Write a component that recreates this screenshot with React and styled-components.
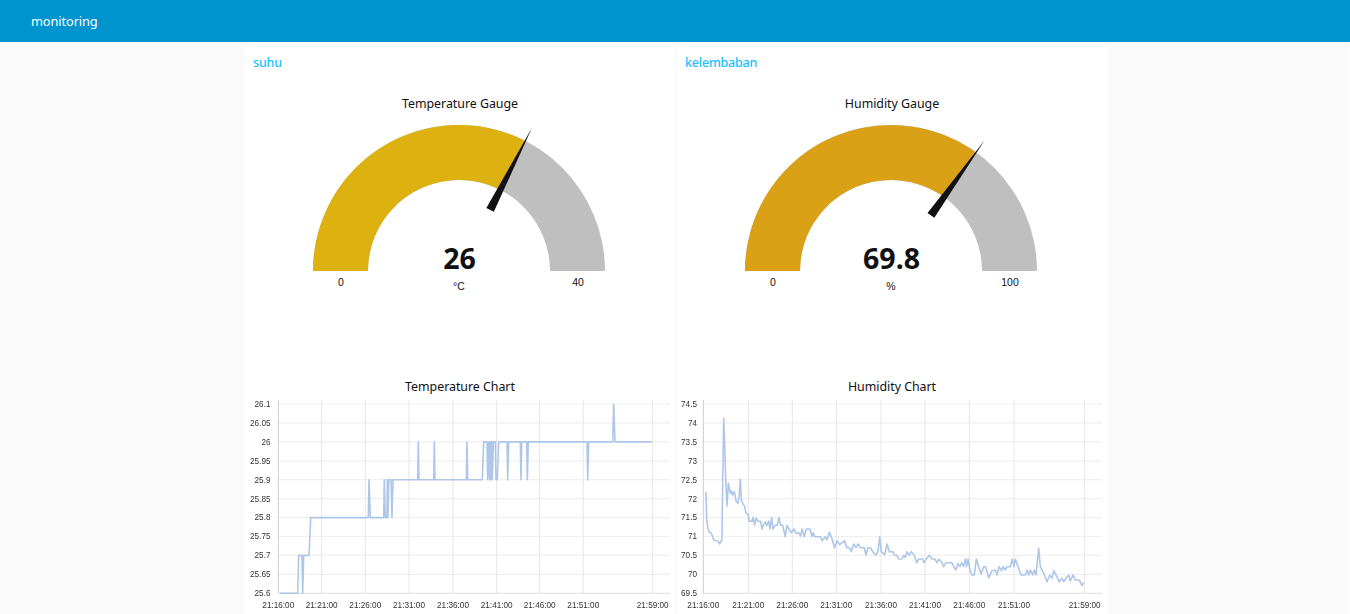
import React from 'react';
import styled, { createGlobalStyle } from 'styled-components';

const Global = createGlobalStyle`
  html, body { margin: 0; height: 100%; overflow: hidden; background: #fafafa; }
  #root { height: 100%; }
`;

const Page = styled.div`
  height: 100vh;
  display: flex;
  flex-direction: column;
  font-family: "Noto Sans", "Open Sans", sans-serif;
  overflow: hidden;
`;
const Toolbar = styled.header`
  flex: 0 0 42px;
  display: flex;
  align-items: center;
  padding-left: 31px;
  background: #0094ce;
  color: #fff;
  font-size: 12.8px;
  letter-spacing: -0.1px;
  line-height: 42px;
`;
const Main = styled.main`
  flex: 1;
  min-height: 0;
  display: grid;
  grid-template-columns: 430px 430px;
  column-gap: 2px;
  padding: 3px 0 0 245px;
  border-right: 1px solid #fff;
`;
const Card = styled.section`
  background: #fff;
  display: flex;
  flex-direction: column;
  overflow: hidden;
`;
const GroupTitle = styled.h2`
  margin: 0;
  height: 34px;
  padding-left: 8px;
  font-size: 12.5px;
  font-weight: 500;
  letter-spacing: -0.2px;
  line-height: 35px;
  color: #1bbfff;
`;
const Widget = styled.div`
  height: ${p => p.$height}px;
  margin-top: ${p => p.$top}px;
  display: flex;
  flex-direction: column;
`;
const WidgetTitle = styled.div`
  height: 20px;
  line-height: 22px;
  text-align: center;
  font-size: 12.4px;
  letter-spacing: -0.03px;
  color: #111;
`;
const Drawing = styled.svg`
  display: block;
  flex: none;
  filter: ${p => (p.$soft ? 'blur(0.45px)' : 'none')};
`;

function Gauge({ left, cx, fill, value, unit, min, max }) {
  const cy = 271, R = 146, r = 91;
  const t = (parseFloat(value) - min) / (max - min);
  const a = Math.PI * (1 - t);
  const px = (rad, ang) => [cx + rad * Math.cos(ang), cy - rad * Math.sin(ang)];
  const [ox, oy] = px(R, a);
  const [ix, iy] = px(r, a);
  const [tx, ty] = px(160.5, a);
  const [bx, by] = px(68.5, a);
  const nx = Math.sin(a) * 4.2, ny = Math.cos(a) * 4.2;
  return (
    <Drawing viewBox={`${left} 113 430 200`} width="430" height="200">
      <path fill="#bfbfbf" d={`M${cx - R} ${cy}A${R} ${R} 0 0 1 ${cx + R} ${cy}H${cx + r}A${r} ${r} 0 0 0 ${cx - r} ${cy}Z`} />
      <path fill={fill} d={`M${cx - R} ${cy}A${R} ${R} 0 0 1 ${ox} ${oy}L${ix} ${iy}A${r} ${r} 0 0 0 ${cx - r} ${cy}Z`} />
      <path fill="#111" d={`M${tx} ${ty}L${bx + nx} ${by + ny}L${bx - nx} ${by - ny}Z`} />
      <text x={cx + 0.5} y="269" textAnchor="middle" fontFamily='"Noto Sans", sans-serif' fontWeight="700" fontSize="28.5" fill="#111">{value}</text>
      <text x={cx} y="290" textAnchor="middle" fontFamily='"Liberation Sans", sans-serif' fontSize="10.5" fill="#111">{unit}</text>
      <text x={cx - 118} y="286" textAnchor="middle" fontFamily='"Liberation Sans", sans-serif' fontSize="10.5" fill="#111">{min}</text>
      <text x={cx + 119} y="286" textAnchor="middle" fontFamily='"Liberation Sans", sans-serif' fontSize="10.5" fill="#111">{max}</text>
    </Drawing>
  );
}

function Chart({ left, axisX, labelX, rightX, gridX, xLabels, yLabels, line }) {
  const top = 404, bottom = 593.3;
  const step = (bottom - top) / (yLabels.length - 1);
  return (
    <Drawing $soft viewBox={`${left} 396 430 218`} width="430" height="218">
      {yLabels.map((l, i) => {
        const y = top + step * i;
        return (
          <g key={l}>
            <line x1={axisX} x2={rightX} y1={y} y2={y} stroke={i === yLabels.length - 1 ? '#e2e2e2' : '#f0f0f0'} strokeWidth="1.2" />
            <text x={labelX} y={y + 2.9} textAnchor="end" fontFamily='"Liberation Sans", sans-serif' fontSize="8.2" fill="#333">{l}</text>
          </g>
        );
      })}
      <line x1={axisX} x2={axisX} y1="400" y2={bottom} stroke="#ccc" strokeWidth="1" />
      {gridX.map((x, i) => (
        <g key={xLabels[i]}>
          {i > 0 && <line x1={x} x2={x} y1="400" y2={bottom} stroke="#e6e6e6" strokeWidth="1" />}
          <text x={x} y="607.5" textAnchor="middle" fontFamily='"Liberation Sans", sans-serif' fontSize="8.2" fill="#333">{xLabels[i]}</text>
        </g>
      ))}
      <polyline points={line} fill="none" stroke="#aec7e8" strokeWidth="1.6" strokeLinejoin="round" />
    </Drawing>
  );
}

const times = ['21:16:00', '21:21:00', '21:26:00', '21:31:00', '21:36:00', '21:41:00', '21:46:00', '21:51:00', '21:59:00'];

const tempSteps = [
  [120, 25.6], [173, 25.6], [176, 25.7], [186, 25.7], [188, 25.6], [191, 25.7], [207, 25.7], [212, 25.8], [385, 25.8],
  [387, 25.9], [391, 25.8], [431, 25.8], [433, 25.9], [436, 25.8], [441, 25.8], [442, 25.9], [444, 25.8], [446, 25.9],
  [453, 25.9], [456, 25.8], [459, 25.9], [533, 25.9], [535, 26], [537, 25.9], [581, 25.9], [583, 26], [585, 25.9],
  [679, 25.9], [681, 26], [683, 25.9], [727, 25.9], [731, 26], [741, 26], [743, 25.9], [746, 26], [749, 25.9], [751, 26],
  [753, 25.9], [755, 26], [757, 25.9], [760, 26], [766, 26], [768, 25.9], [772, 25.9], [776, 26], [801, 26], [803, 25.9],
  [806, 26], [841, 26], [843, 25.9], [845, 26], [860, 26], [862, 25.9], [865, 26], [1041, 26], [1043, 25.9], [1046, 26],
  [1118, 26], [1121, 26.1], [1125, 26], [1235, 26],
];
const tempLine = tempSteps
  .map(([x, v]) => `${(x / 3 + 240).toFixed(1)},${(593.3 - ((v - 25.6) / 0.5) * 189.3).toFixed(1)}`)
  .join(' ');

const humPoints = [
  102,335,104,420,108,445,112,457,117,458,122,470,125,480,133,482,138,483,143,492,150,478,152,300,155,115,158,200,161,300,165,378,
  169,310,175,340,178,332,182,345,187,335,193,365,198,370,202,345,205,298,208,360,212,370,218,380,222,400,228,403,232,424,240,424,
  243,412,248,436,252,414,258,424,266,424,270,447,274,436,280,425,284,437,290,423,294,447,299,412,303,447,310,436,316,436,321,412,
  326,436,332,436,340,470,345,436,352,448,358,458,366,447,372,460,380,458,386,468,390,447,397,470,403,447,414,447,420,470,424,458,
  428,470,446,470,450,482,460,470,465,480,472,457,478,470,488,503,495,482,503,494,518,482,524,503,532,503,538,515,545,492,552,503,
  558,492,565,503,577,503,582,525,588,503,595,503,606,520,612,525,618,515,623,470,628,515,638,524,645,492,652,515,662,515,668,526,
  675,526,680,537,690,537,695,526,700,532,705,515,712,526,718,515,727,526,734,548,740,537,752,537,756,548,763,537,772,526,780,537,
  788,537,795,548,800,537,810,548,815,560,822,548,840,548,845,560,852,570,858,550,864,560,869,548,875,560,880,537,884,560,888,537,
  895,575,900,585,907,585,913,537,920,560,927,582,935,560,941,560,950,594,960,572,970,570,975,585,981,560,988,572,993,560,1000,570,
  1005,560,1015,560,1021,537,1026,560,1030,537,1038,560,1047,585,1060,585,1065,570,1070,585,1075,570,1082,585,1087,570,1092,585,
  1100,505,1105,560,1115,580,1125,605,1133,585,1140,595,1145,572,1155,590,1162,605,1170,595,1175,605,1182,595,1190,585,1195,603,
  1203,585,1210,600,1222,600,1230,617,1235,607,
];
const humLine = humPoints
  .reduce((acc, n, i) => {
    if (i % 2 === 0) acc.push(`${(n / 3 + 672).toFixed(1)},${(humPoints[i + 1] / 3 + 380).toFixed(1)}`);
    return acc;
  }, [])
  .join(' ');

export default function App() {
  return (
    <Page>
      <Global />
      <Toolbar>monitoring</Toolbar>
      <Main>
        <Card>
          <GroupTitle>suhu</GroupTitle>
          <Widget $top={14} $height={283}>
            <WidgetTitle>Temperature Gauge</WidgetTitle>
            <Gauge left={245} cx={459} fill="#ddb10f" value="26" unit="°C" min={0} max={40} />
          </Widget>
          <Widget $top={0} $height={238}>
            <WidgetTitle>Temperature Chart</WidgetTitle>
            <Chart
              left={245}
              axisX={278.3}
              labelX={270.5}
              rightX={670}
              gridX={[278.3, 321.7, 365.3, 409, 453, 496.7, 539.7, 583.3, 652.7]}
              xLabels={times}
              yLabels={['26.1', '26.05', '26', '25.95', '25.9', '25.85', '25.8', '25.75', '25.7', '25.65', '25.6']}
              line={tempLine}
            />
          </Widget>
        </Card>
        <Card>
          <GroupTitle>kelembaban</GroupTitle>
          <Widget $top={14} $height={283}>
            <WidgetTitle>Humidity Gauge</WidgetTitle>
            <Gauge left={677} cx={891} fill="#daa016" value="69.8" unit="%" min={0} max={100} />
          </Widget>
          <Widget $top={0} $height={238}>
            <WidgetTitle>Humidity Chart</WidgetTitle>
            <Chart
              left={677}
              axisX={703.3}
              labelX={697}
              rightX={1102}
              gridX={[703.3, 748.3, 792.3, 836.3, 881, 925, 969.3, 1014, 1084.7]}
              xLabels={times}
              yLabels={['74.5', '74', '73.5', '73', '72.5', '72', '71.5', '71', '70.5', '70', '69.5']}
              line={humLine}
            />
          </Widget>
        </Card>
      </Main>
    </Page>
  );
}
